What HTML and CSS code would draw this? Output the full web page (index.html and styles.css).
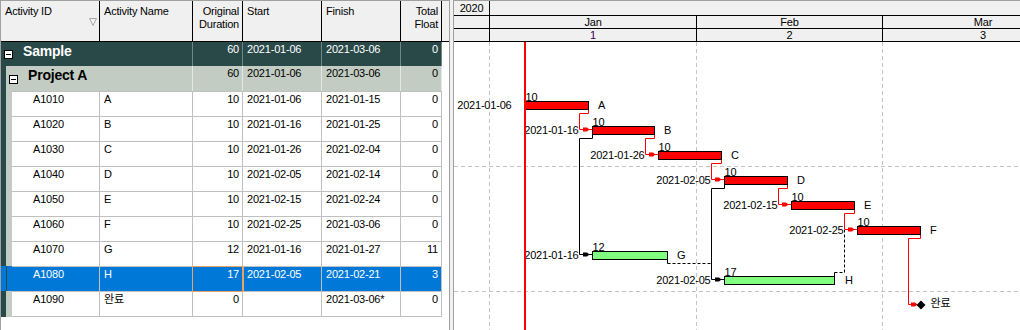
FILE: index.html
```html
<!DOCTYPE html>
<html lang="ko">
<head>
  <meta charset="UTF-8">
  <meta name="viewport" content="width=device-width, initial-scale=1.0">
  <title>Sample - Gantt</title>
  <link rel="stylesheet" href="styles.css">
</head>
<body>
  <div class="container">
    <div class="left-panel">
      <div class="grid-header">
        <div class="hcell id-head">Activity ID
          <svg class="sort-mark" width="9" height="9" viewBox="0 0 9 9"><polygon points="0.5,0.5 7.5,0.5 4,7.5"/></svg>
        </div>
        <div class="hcell">Activity Name</div>
        <div class="hcell num">Original<br>Duration</div>
        <div class="hcell">Start</div>
        <div class="hcell">Finish</div>
        <div class="hcell num">Total<br>Float</div>
        <div class="hcell filler"></div>
      </div>

      <div class="rows">
        <div class="row wbs-top">
          <div class="cells">
            <div class="cell name-cell"><span class="toggle"></span>Sample</div>
            <div class="cell num">60</div>
            <div class="cell">2021-01-06</div>
            <div class="cell">2021-03-06</div>
            <div class="cell num">0</div>
          </div>
        </div>
        <div class="row wbs-sub">
          <div class="strip strip-a"></div>
          <div class="cells">
            <div class="cell name-cell"><span class="toggle"></span>Project A</div>
            <div class="cell num">60</div>
            <div class="cell">2021-01-06</div>
            <div class="cell">2021-03-06</div>
            <div class="cell num">0</div>
          </div>
        </div>

        <div class="row task">
          <div class="strip strip-a"></div><div class="strip strip-b"></div>
          <div class="cells">
            <div class="cell id">A1010</div><div class="cell">A</div><div class="cell num">10</div>
            <div class="cell">2021-01-06</div><div class="cell">2021-01-15</div><div class="cell num">0</div>
          </div>
        </div>
        <div class="row task">
          <div class="strip strip-a"></div><div class="strip strip-b"></div>
          <div class="cells">
            <div class="cell id">A1020</div><div class="cell">B</div><div class="cell num">10</div>
            <div class="cell">2021-01-16</div><div class="cell">2021-01-25</div><div class="cell num">0</div>
          </div>
        </div>
        <div class="row task">
          <div class="strip strip-a"></div><div class="strip strip-b"></div>
          <div class="cells">
            <div class="cell id">A1030</div><div class="cell">C</div><div class="cell num">10</div>
            <div class="cell">2021-01-26</div><div class="cell">2021-02-04</div><div class="cell num">0</div>
          </div>
        </div>
        <div class="row task">
          <div class="strip strip-a"></div><div class="strip strip-b"></div>
          <div class="cells">
            <div class="cell id">A1040</div><div class="cell">D</div><div class="cell num">10</div>
            <div class="cell">2021-02-05</div><div class="cell">2021-02-14</div><div class="cell num">0</div>
          </div>
        </div>
        <div class="row task">
          <div class="strip strip-a"></div><div class="strip strip-b"></div>
          <div class="cells">
            <div class="cell id">A1050</div><div class="cell">E</div><div class="cell num">10</div>
            <div class="cell">2021-02-15</div><div class="cell">2021-02-24</div><div class="cell num">0</div>
          </div>
        </div>
        <div class="row task">
          <div class="strip strip-a"></div><div class="strip strip-b"></div>
          <div class="cells">
            <div class="cell id">A1060</div><div class="cell">F</div><div class="cell num">10</div>
            <div class="cell">2021-02-25</div><div class="cell">2021-03-06</div><div class="cell num">0</div>
          </div>
        </div>
        <div class="row task">
          <div class="strip strip-a"></div><div class="strip strip-b"></div>
          <div class="cells">
            <div class="cell id">A1070</div><div class="cell">G</div><div class="cell num">12</div>
            <div class="cell">2021-01-16</div><div class="cell">2021-01-27</div><div class="cell num">11</div>
          </div>
        </div>
        <div class="row task selected">
          <div class="strip strip-a"></div><div class="strip strip-b"></div>
          <div class="cells">
            <div class="cell id">A1080</div><div class="cell">H</div><div class="cell num focus">17</div>
            <div class="cell">2021-02-05</div><div class="cell">2021-02-21</div><div class="cell num">3</div>
          </div>
        </div>
        <div class="row task last">
          <div class="strip strip-a"></div><div class="strip strip-b"></div>
          <div class="cells">
            <div class="cell id">A1090</div><div class="cell">완료</div><div class="cell num">0</div>
            <div class="cell"></div><div class="cell">2021-03-06*</div><div class="cell num">0</div>
          </div>
        </div>
      </div>
    </div>

    <div class="splitter"></div>

    <div class="gantt-panel">
      <div class="timescale">
        <div class="ts-row year">
          <div class="ts-cell">2020</div>
          <div class="ts-cell open"></div>
        </div>
        <div class="ts-row">
          <div class="ts-cell"></div>
          <div class="ts-cell">Jan</div>
          <div class="ts-cell">Feb</div>
          <div class="ts-cell">Mar</div>
        </div>
        <div class="ts-row">
          <div class="ts-cell"></div>
          <div class="ts-cell current">1</div>
          <div class="ts-cell">2</div>
          <div class="ts-cell">3</div>
        </div>
      </div>

      <svg class="gantt-chart" width="566" height="288" viewBox="454 42 566 288">
        <g class="grid-lines">
          <line x1="489.5" y1="42" x2="489.5" y2="330"/>
          <line x1="696.5" y1="42" x2="696.5" y2="330"/>
          <line x1="882.5" y1="42" x2="882.5" y2="330"/>
          <line x1="454" y1="166.5" x2="1020" y2="166.5"/>
          <line x1="454" y1="291.5" x2="1020" y2="291.5"/>
        </g>

        <!-- driving (critical) links -->
        <g class="link critical">
          <path d="M588.5 109V113.5H579.5V129.5H592"/>
          <path d="M654.5 134V138.5H645.5V154.5H658"/>
          <path d="M721.5 159V163.5H711.5V179.5H724"/>
          <path d="M787.5 184V188.5H778.5V204.5H791"/>
          <path d="M854.5 209V213.5H844.5V229.5H857"/>
          <path d="M920.5 234V238.5H908.5V304.5H917"/>
        </g>
        <g class="arrow critical">
          <polygon points="583,127.5 587,127.5 589.5,129.5 587,131.5 583,131.5"/>
          <polygon points="649,152.5 653,152.5 655.5,154.5 653,156.5 649,156.5"/>
          <polygon points="715,177.5 719,177.5 721.5,179.5 719,181.5 715,181.5"/>
          <polygon points="782,202.5 786,202.5 788.5,204.5 786,206.5 782,206.5"/>
          <polygon points="848,227.5 852,227.5 854.5,229.5 852,231.5 848,231.5"/>
          <polygon points="911,302.5 915,302.5 917.5,304.5 915,306.5 911,306.5"/>
        </g>

        <!-- start-to-start links -->
        <g class="link">
          <path d="M592.5 134V138.5H579.5V254.5H592"/>
          <path d="M724.5 184V188.5H711.5V279.5H724"/>
          <path d="M667.5 259V263.5"/>
          <path d="M834.5 276V272.5"/>
        </g>
        <g class="arrow">
          <polygon points="583,252.5 587,252.5 589.5,254.5 587,256.5 583,256.5"/>
          <polygon points="715,277.5 719,277.5 721.5,279.5 719,281.5 715,281.5"/>
        </g>
        <g class="link dashed">
          <path d="M667.5 263.5H711.5"/>
          <path d="M834.5 272.5H844.5V230"/>
        </g>

        <g class="bar critical">
          <rect x="525.5" y="101.5" width="63" height="8"/>
          <rect x="592.5" y="126.5" width="62" height="8"/>
          <rect x="658.5" y="151.5" width="63" height="8"/>
          <rect x="724.5" y="176.5" width="63" height="8"/>
          <rect x="791.5" y="201.5" width="63" height="8"/>
          <rect x="857.5" y="226.5" width="63" height="8"/>
        </g>
        <g class="bar normal">
          <rect x="592.5" y="251.5" width="75" height="8"/>
          <rect x="724.5" y="276.5" width="110" height="8"/>
        </g>
        <polygon class="milestone" points="921,300.5 925.5,305 921,309.5 916.5,305"/>

        <g class="bar-text">
          <text x="525.5" y="100.5">10</text>
          <text x="592.5" y="125.5">10</text>
          <text x="658.5" y="150.5">10</text>
          <text x="724.5" y="175.5">10</text>
          <text x="791.5" y="200.5">10</text>
          <text x="857.5" y="225.5">10</text>
          <text x="592.5" y="250.5">12</text>
          <text x="724.5" y="275.5">17</text>

          <text class="date" x="511.5" y="108.5">2021-01-06</text>
          <text class="date" x="578.5" y="133.5">2021-01-16</text>
          <text class="date" x="644.5" y="158.5">2021-01-26</text>
          <text class="date" x="710.5" y="183.5">2021-02-05</text>
          <text class="date" x="777.5" y="208.5">2021-02-15</text>
          <text class="date" x="843.5" y="233.5">2021-02-25</text>
          <text class="date" x="578.5" y="258.5">2021-01-16</text>
          <text class="date" x="710.5" y="283.5">2021-02-05</text>

          <text x="598" y="109">A</text>
          <text x="664" y="134">B</text>
          <text x="731" y="159">C</text>
          <text x="797" y="184">D</text>
          <text x="864" y="209">E</text>
          <text x="930" y="234">F</text>
          <text x="677" y="259">G</text>
          <text x="845" y="284">H</text>
          <text x="930.5" y="307">완료</text>
        </g>

        <rect class="data-date" x="524" y="42" width="2" height="288"/>
      </svg>
    </div>
  </div>
</body>
</html>
```

FILE: styles.css
```css
body {
  margin: 0;
  font-family: "Liberation Sans", Arial, "Noto Sans CJK KR", sans-serif;
  font-size: 11px;
  letter-spacing: -0.2px;
  color: #000;
  background: #f0f0f0;
}

.container {
  display: flex;
  height: 330px;
  overflow: hidden;
}

/* ---------- activity table ---------- */

.left-panel {
  width: 450px;
  flex: none;
  box-sizing: border-box;
  border-top: 1px solid #a0a0a0;
  border-left: 1px solid #a0a0a0;
  border-right: 1px solid #a0a0a0;
  background: #fff;
}

.grid-header {
  display: grid;
  grid-template-columns: 99px 93px 50px 79px 79px 41px 1fr;
  height: 41px;
  box-sizing: border-box;
  border-bottom: 1px solid #000;
  background: #f0f0f0;
}

.hcell {
  border-right: 1px solid #000;
  padding: 4px 3px 0 4px;
  line-height: 13px;
  white-space: nowrap;
}

.hcell.num {
  text-align: right;
}

.hcell.filler {
  border-right: none;
}

.id-head {
  position: relative;
}

.sort-mark {
  position: absolute;
  left: 88px;
  top: 17px;
}

.sort-mark polygon {
  fill: none;
  stroke: #a8a8a8;
}

.rows {
  width: 441px;
}

.row {
  display: flex;
  height: 25px;
}

.strip {
  flex: none;
}

.strip-a {
  width: 5px;
  background: #294848;
}

.strip-b {
  width: 6px;
  background: #c2ccc2;
}

.cells {
  flex: 1;
  display: grid;
  grid-template-columns: 1fr 93px 50px 79px 79px 41px;
  min-width: 0;
}

.cell {
  border-right: 1px solid #c0c0c0;
  padding: 1px 3px 0 4px;
  line-height: 13px;
  white-space: nowrap;
  overflow: hidden;
}

.cell.num {
  text-align: right;
}

.cell.id {
  padding-left: 21px;
}

.name-cell {
  grid-column: span 2;
  display: flex;
  align-items: flex-start;
  padding-left: 3px;
  font-size: 14px;
  font-weight: bold;
  line-height: 16px;
}

.toggle {
  width: 9px;
  height: 9px;
  flex: none;
  box-sizing: border-box;
  border: 1px solid #000;
  background: linear-gradient(#000, #000) center / 5px 1px no-repeat, #fff;
  align-self: center;
  margin-right: 10px;
}

.wbs-top {
  height: 24px;
  background: #294848;
  color: #fff;
}

.wbs-top .cell {
  border-right-color: #6f8686;
}

.wbs-sub .cells {
  background: #c2ccc2;
}

.wbs-sub .cell {
  border-right-color: #e2e8e2;
}

.task .cells {
  border-top: 1px solid #c0c0c0;
}

.task.last {
  height: 26px;
}

.task.last .cells {
  border-bottom: 1px solid #c0c0c0;
}

.selected .cells,
.selected .strip {
  background: #0078d7;
  color: #fff;
}

.selected .strip-a {
  border-right: 1px solid #294848;
  box-sizing: border-box;
  width: 6px;
}

.selected .strip-b {
  width: 5px;
}

.cell.focus {
  box-shadow: 0 0 0 1px #eba263;
  border-right-color: #eba263;
  position: relative;
  z-index: 1;
}

.splitter {
  width: 3px;
  flex: none;
  background: #f0f0f0;
}

/* ---------- gantt ---------- */

.gantt-panel {
  flex: 1;
  min-width: 0;
  display: flex;
  flex-direction: column;
  border-top: 1px solid #a0a0a0;
  border-left: 1px solid #a0a0a0;
  background: #fff;
  overflow: hidden;
}

.timescale {
  width: 630px;
  flex: none;
  background: #f0f0f0;
}

.ts-row {
  display: grid;
  grid-template-columns: 36px 207px 186px 201px;
  height: 13px;
  box-sizing: border-box;
  border-bottom: 1px solid #000;
}

.ts-row.year {
  grid-template-columns: 36px 1fr;
  height: 15px;
}

.ts-cell {
  border-right: 1px solid #000;
  text-align: center;
  line-height: 12px;
}

.year .ts-cell {
  line-height: 14px;
}

.ts-cell.open {
  border-right: none;
}

.ts-cell.current {
  color: #400050;
}

.gantt-chart {
  display: block;
  flex: none;
}

.grid-lines line {
  stroke: #c4c4c4;
  stroke-width: 1;
  stroke-dasharray: 4 3;
}

.link path {
  fill: none;
  stroke: #000;
  stroke-width: 1;
}

.link.critical path {
  stroke: #f00;
}

.link.dashed path {
  stroke-dasharray: 3 2;
}

.arrow polygon {
  fill: #000;
}

.arrow.critical polygon {
  fill: #f00;
}

.bar rect {
  stroke: #000;
  stroke-width: 1;
}

.bar.critical rect {
  fill: #f00;
}

.bar.normal rect {
  fill: #80ff80;
}

.milestone {
  fill: #000;
}

.bar-text text {
  font-family: "Liberation Sans", Arial, "Noto Sans CJK KR", sans-serif;
  font-size: 11px;
  letter-spacing: -0.2px;
  fill: #000;
}

.bar-text .date {
  text-anchor: end;
}

.data-date {
  fill: #f00;
}
```
